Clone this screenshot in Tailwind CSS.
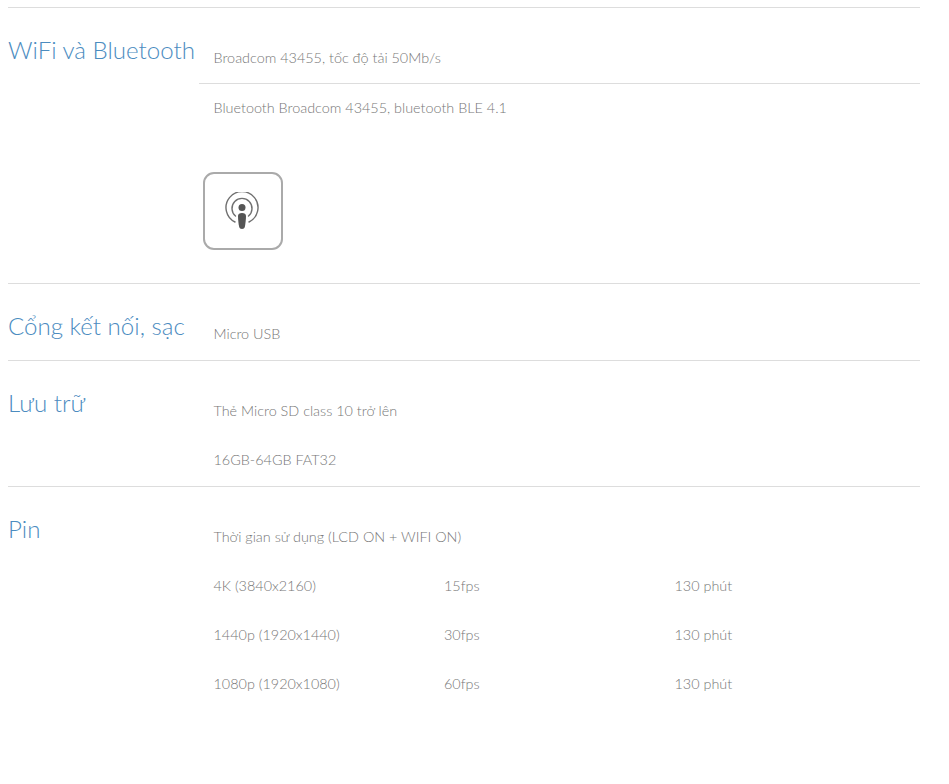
<!doctype html>
<html lang="vi"><head><meta charset="utf-8"><script src="https://cdn.jsdelivr.net/npm/@tailwindcss/browser@4"></script></head>
<body class="bg-white font-['Lato',sans-serif] font-light text-[14.4px] text-[#777]">
<main class="w-[912px] ml-2 pt-[7px] h-[784px] overflow-hidden">
  <section class="flex border-t border-[#ddd] h-[276px]">
    <h2 class="w-[191px] shrink-0 pt-[26px] text-[24.1px] leading-[32px] font-light text-[#4c8cbf] whitespace-nowrap">WiFi và Bluetooth</h2>
    <div class="flex-1 pt-[25px]">
      <p class="h-[51px] pb-px pl-[14.5px] flex items-center border-b border-[#ddd]">Broadcom 43455, tốc độ tải 50Mb/s</p>
      <p class="h-[48px] pl-[14.5px] flex items-center">Bluetooth Broadcom 43455, bluetooth BLE 4.1</p>
      <div class="ml-1 mt-[40px] w-20 h-[78px] border-2 border-[#aaa] rounded-[11px] flex items-center justify-center">
        <svg width="36" height="38" viewBox="0 0 36 38" fill="none" class="-translate-x-px">
          <path d="M11 30a16 16 0 1 1 14 0" stroke="#707070" stroke-width="1.4" stroke-linecap="round"/>
          <path d="M11.5 24a10 10 0 1 1 13 0" stroke="#707070" stroke-width="1.4" stroke-linecap="round"/>
          <circle cx="18" cy="15.5" r="3.5" fill="#555"/>
          <path d="M14 24c0-2 1.500-3 4-3s4 1 4 3c0 3-.6 8.500-1.200 11-.3 1.200-1.300 2-2.800 2s-2.500-.8-2.800-2C14.600 32.500 14 27 14 24z" fill="#555"/>
        </svg>
      </div>
    </div>
  </section>
  <section class="flex border-t border-[#ddd] h-[77px]">
    <h2 class="w-[191px] shrink-0 pt-[26px] text-[24.1px] leading-[32px] font-light text-[#4c8cbf] whitespace-nowrap">Cổng kết nối, sạc</h2>
    <div class="flex-1 pt-[25px]"><p class="h-[49px] pl-[14.5px] flex items-center">Micro USB</p></div>
  </section>
  <section class="flex border-t border-[#ddd] h-[126px]">
    <h2 class="w-[191px] shrink-0 pt-[26px] text-[24.1px] leading-[32px] font-light text-[#4c8cbf]">Lưu trữ</h2>
    <div class="flex-1 pt-[25px]">
      <p class="h-[49px] pl-[14.5px] flex items-center">Thẻ Micro SD class 10 trở lên</p>
      <p class="h-[49px] pl-[14.5px] flex items-center">16GB-64GB FAT32</p>
    </div>
  </section>
  <section class="flex border-t border-[#ddd]">
    <h2 class="w-[191px] shrink-0 pt-[26px] text-[24.1px] leading-[32px] font-light text-[#4c8cbf]">Pin</h2>
    <div class="flex-1 pt-[25px]">
      <p class="h-[49px] pl-[14.5px] flex items-center">Thời gian sử dụng (LCD ON + WIFI ON)</p>
      <div class="grid grid-cols-[230.5px_230.5px_1fr] pl-[14.5px] auto-rows-[49px] items-center">
        <span>4K (3840x2160)</span><span>15fps</span><span>130 phút</span>
        <span>1440p (1920x1440)</span><span>30fps</span><span>130 phút</span>
        <span>1080p (1920x1080)</span><span>60fps</span><span>130 phút</span>
      </div>
    </div>
  </section>
</main>
</body></html>
